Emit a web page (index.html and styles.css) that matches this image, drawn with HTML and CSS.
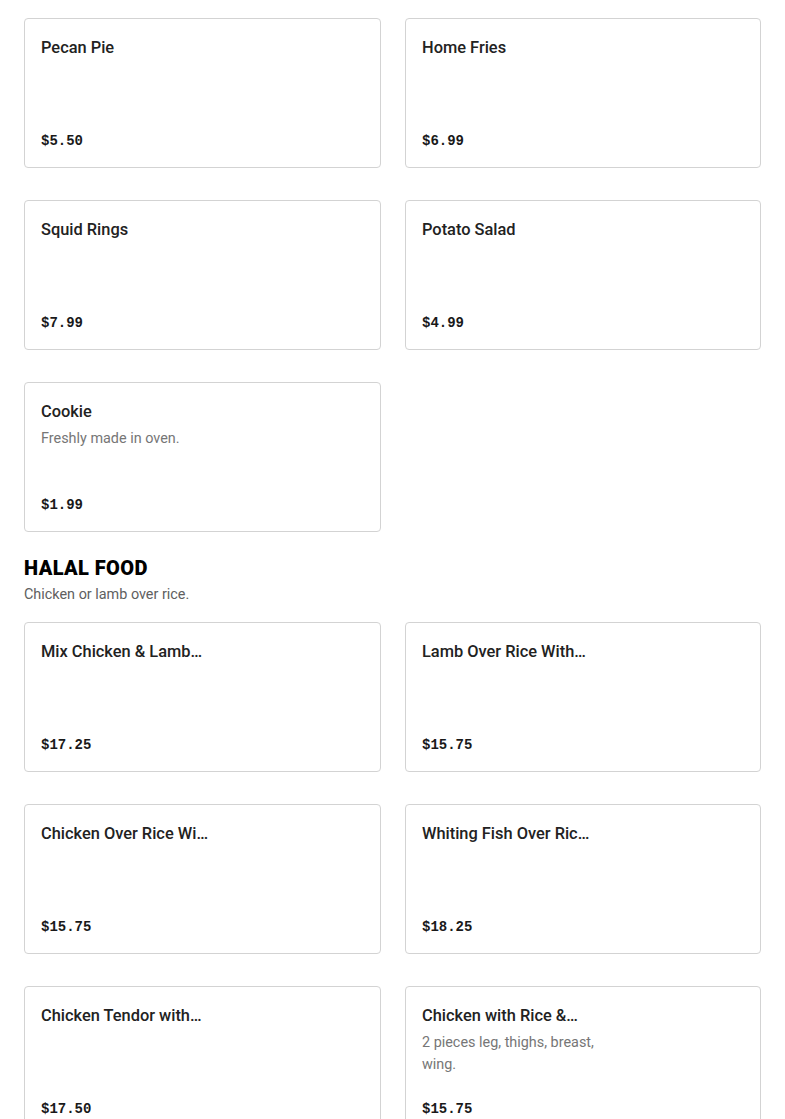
FILE: index.html
```html
<!DOCTYPE html>
<html>
<head>
<meta charset="utf-8">
<link rel="stylesheet" href="styles.css">
</head>
<body>
<div class="page">
  <section class="section">
    <div class="grid">
      <div class="card"><div class="info"><div class="title">Pecan Pie</div></div><div class="price">$5.50</div></div>
      <div class="card"><div class="info"><div class="title">Home Fries</div></div><div class="price">$6.99</div></div>
      <div class="card"><div class="info"><div class="title">Squid Rings</div></div><div class="price">$7.99</div></div>
      <div class="card"><div class="info"><div class="title">Potato Salad</div></div><div class="price">$4.99</div></div>
      <div class="card"><div class="info"><div class="title">Cookie</div><div class="desc">Freshly made in oven.</div></div><div class="price">$1.99</div></div>
    </div>
  </section>
  <section class="section">
    <h2 class="sec-title">HALAL FOOD</h2>
    <p class="sec-desc">Chicken or lamb over rice.</p>
    <div class="grid">
      <div class="card"><div class="info"><div class="title">Mix Chicken &amp; Lamb…</div></div><div class="price">$17.25</div></div>
      <div class="card"><div class="info"><div class="title">Lamb Over Rice With…</div></div><div class="price">$15.75</div></div>
      <div class="card"><div class="info"><div class="title">Chicken Over Rice Wi…</div></div><div class="price">$15.75</div></div>
      <div class="card"><div class="info"><div class="title">Whiting Fish Over Ric…</div></div><div class="price">$18.25</div></div>
      <div class="card"><div class="info"><div class="title">Chicken Tendor with…</div></div><div class="price">$17.50</div></div>
      <div class="card"><div class="info"><div class="title">Chicken with Rice &amp;…</div><div class="desc">2 pieces leg, thighs, breast, wing.</div></div><div class="price">$15.75</div></div>
    </div>
  </section>
</div>
</body>
</html>
```
FILE: styles.css
```css
* { box-sizing: border-box; }
html, body { margin: 0; padding: 0; background: #fff; }
body { font-family: Roboto, "Liberation Sans", Arial, sans-serif; color: #191919; }
.page { padding: 18px 24px 0 24px; }
.section + .section { margin-top: 24px; }
.grid {
  display: grid;
  grid-template-columns: 357px 356px;
  column-gap: 24px;
  row-gap: 32px;
}
.card {
  height: 150px;
  border: 1px solid #d3d3d3;
  border-radius: 4px;
  padding: 16px;
  display: flex;
  flex-direction: column;
  justify-content: space-between;
}
.info { max-width: 195px; }
.title {
  font-size: 16.4px;
  font-weight: 500;
  line-height: 26px;
  color: #222;
  white-space: nowrap;
}
.desc {
  margin-top: 3px;
  font-size: 14.4px;
  line-height: 22px;
  color: #767676;
}
.price {
  font-family: "Liberation Mono", "DejaVu Sans Mono", monospace;
  font-weight: 700;
  font-size: 14px;
  line-height: 20px;
  color: #191919;
}
.sec-title {
  margin: 0;
  font-size: 20px;
  font-weight: 900;
  letter-spacing: 0.4px;
  line-height: 24px;
  color: #000;
}
.sec-desc {
  margin: 4px 0 16px 0;
  font-size: 14.4px;
  line-height: 22px;
  color: #606060;
}
```
